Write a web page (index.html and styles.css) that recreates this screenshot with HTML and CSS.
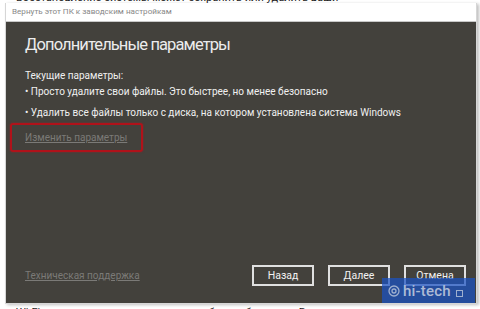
FILE: index.html
```html
<!DOCTYPE html>
<html lang="ru">
<head>
    <meta charset="UTF-8">
    <title>Вернуть этот ПК к заводским настройкам</title>
    <link rel="stylesheet" href="styles.css">
</head>
<body>
    <div class="cut-top"><span>Восстановление системы может сохранить или удалить ваши</span></div>

    <div class="window">
        <div class="titlebar">Вернуть этот ПК к заводским настройкам</div>
        <div class="panel">
            <h1>Дополнительные параметры</h1>
            <p class="label">Текущие параметры:</p>
            <p class="item">• Просто удалите свои файлы. Это быстрее, но менее безопасно</p>
            <p class="item second">• Удалить все файлы только с диска, на котором установлена система Windows</p>
            <div class="highlight">
                <a href="#" class="link">Изменить параметры</a>
            </div>

            <div class="footer">
                <a href="#" class="link">Техническая поддержка</a>
                <div class="buttons">
                    <button>Назад</button>
                    <button>Далее</button>
                    <button>Отмена</button>
                </div>
            </div>

            <div class="watermark">
                <svg width="12" height="12" viewBox="0 0 12 12">
                    <circle cx="6" cy="6" r="5" fill="none" stroke="#9fb0cf" stroke-width="1.3"/>
                    <circle cx="6" cy="6" r="2" fill="none" stroke="#9fb0cf" stroke-width="1.3"/>
                </svg>
                <span>hi-tech</span>
                <i class="sq"></i>
            </div>
        </div>
    </div>

    <div class="cut-bottom">Wi-Fi и другие сетевые подключения будут сброшены. Все</div>
</body>
</html>
```

FILE: styles.css
```css
body {
    margin: 0;
    background-color: #fff;
    font-family: Roboto, "Open Sans", sans-serif;
    width: 480px;
    height: 309px;
    overflow: hidden;
}
.cut-top {
    height: 3px;
    overflow: hidden;
    padding-left: 16px;
}
.cut-top span {
    display: block;
    margin-top: -9px;
    font-size: 11px;
    color: #222;
    white-space: nowrap;
}
.window {
    margin-left: 5px;
    width: 470px;
    border: 1px solid #d6d6d6;
    border-top: none;
    box-shadow: 2px 1px 3px rgba(0, 0, 0, 0.25);
}
.titlebar {
    height: 18px;
    line-height: 17px;
    background-color: #fff;
    color: #888;
    font-size: 8.1px;
    padding-left: 6px;
    border-bottom: 1px solid #c8c8c8;
}
.panel {
    position: relative;
    height: 281px;
    background-color: #43413c;
    padding: 13px 10px 0 19px;
    box-sizing: border-box;
    display: flex;
    flex-direction: column;
    color: #f0f0f0;
}
h1 {
    margin: 0 0 14px 0;
    font-size: 16.5px;
    font-weight: normal;
    color: #ececec;
    letter-spacing: -0.9px;
}
.label, .item {
    margin: 0;
    font-size: 10px;
    line-height: 16px;
}
.item.second {
    margin-top: 5px;
}
.highlight {
    margin: 2px 0 0 -15px;
    width: 116px;
    height: 25px;
    padding-left: 13px;
    border: 2px solid #b0121a;
    border-radius: 3px;
    box-shadow: 0 0 2px rgba(200, 20, 30, 0.6);
    line-height: 21px;
}
.link {
    color: #7b7a77;
    font-size: 10px;
    text-decoration: underline;
}
.footer {
    margin-top: auto;
    margin-bottom: 17px;
    display: flex;
    align-items: center;
    justify-content: space-between;
}
.buttons {
    display: flex;
    gap: 14px;
}
button {
    width: 62px;
    height: 21px;
    background-color: #43413c;
    color: #f2f2f2;
    border: 2px solid #e0e0e0;
    font-family: inherit;
    font-size: 10.5px;
    padding: 0;
}
.watermark {
    position: absolute;
    right: 1px;
    bottom: 0;
    width: 93px;
    height: 25px;
    background-color: rgba(26, 82, 196, 0.72);
    display: flex;
    align-items: center;
    gap: 3px;
    padding-left: 6px;
    box-sizing: border-box;
}
.watermark span {
    color: #aebbd6;
    font-size: 15px;
    font-weight: 500;
    letter-spacing: 0.2px;
}
.watermark .sq {
    width: 5px;
    height: 5px;
    border: 1px solid #9fb0cf;
    margin-left: 2px;
    margin-top: 5px;
}
.cut-bottom {
    margin-top: 2px;
    padding-left: 16px;
    font-size: 11px;
    color: #222;
    white-space: nowrap;
}
```
